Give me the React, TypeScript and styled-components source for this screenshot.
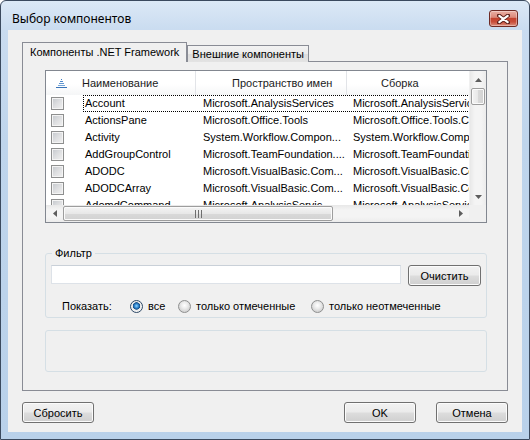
import React from 'react';
import styled, { createGlobalStyle } from 'styled-components';

const GlobalStyle = createGlobalStyle`
  html, body {
    margin: 0;
    padding: 0;
    background: #ffffff;
  }
  body {
    font-family: "Liberation Sans", Arial, sans-serif;
    font-size: 11px;
    color: #000000;
  }
  * {
    box-sizing: border-box;
  }
`;

const Window = styled.div`
  width: 530px;
  height: 440px;
  display: flex;
  flex-direction: column;
  border: 1px solid #3b4a5e;
  border-radius: 6px 6px 0 0;
  overflow: hidden;
  background: linear-gradient(to bottom, #dce9f6 0px, #cadcf0 28px, #bfd5ec 140px, #b9d1ea 100%);
`;

const TitleBar = styled.div`
  height: 29px;
  flex: none;
  display: flex;
  align-items: flex-start;
  padding: 0 11px 0 11px;
`;

const Title = styled.div`
  margin-top: 10px;
  font-family: "Noto Sans", "Liberation Sans", sans-serif;
  font-size: 12px;
  line-height: 16px;
  color: #000;
`;

const CloseButton = styled.div`
  margin-left: auto;
  margin-top: 9px;
  width: 29px;
  height: 17px;
  border: 1px solid #6e2a24;
  border-radius: 3px;
  display: flex;
  align-items: center;
  justify-content: center;
  background: linear-gradient(
    to bottom,
    #eab0a4 0%,
    #dc8a7b 42%,
    #c4432f 50%,
    #c84d39 72%,
    #dc8f7f 100%
  );
  box-shadow: inset 0 0 0 1px rgba(255, 255, 255, 0.35);
`;

const Client = styled.div`
  flex: 1;
  margin: 0 7px 7px 7px;
  background: #f0f0f0;
  padding: 12px 14px 0 14px;
  display: flex;
  flex-direction: column;
`;

const TabStrip = styled.div`
  display: flex;
  align-items: flex-end;
  height: 20px;
  flex: none;
`;

const Tab = styled.div<{ $active?: boolean }>`
  position: relative;
  z-index: ${p => (p.$active ? 1 : 0)};
  height: ${p => (p.$active ? 20 : 17)}px;
  padding: 0 ${p => (p.$active ? 7 : 4)}px;
  line-height: ${p => (p.$active ? 18 : 16)}px;
  border: 1px solid #898c95;
  border-bottom: none;
  white-space: nowrap;
  background: ${p => (p.$active ? '#f0f0f0' : 'linear-gradient(to bottom, #f3f3f3, #ebebeb 50%, #dddddd 51%, #e3e3e3)')};
`;

const TabPanel = styled.div`
  margin-top: -1px;
  height: 330px;
  flex: none;
  border: 1px solid #898c95;
  background: #f0f0f0;
  padding: 8px 0 0 22px;
  display: flex;
  flex-direction: column;
`;

const ListBox = styled.div`
  width: 442px;
  height: 153px;
  flex: none;
  border: 1px solid #828790;
  background: #ffffff;
  display: grid;
  grid-template-columns: 1fr 17px;
  grid-template-rows: 1fr 17px;
`;

const Viewport = styled.div`
  overflow: hidden;
  min-width: 0;
  display: flex;
  flex-direction: column;
`;

const Header = styled.div`
  display: flex;
  height: 24px;
  flex: none;
  background: linear-gradient(to bottom, #ffffff 0%, #ffffff 55%, #f5f6f7 100%);
`;

const HeaderCell = styled.div<{ $w: number; $pad: number; $divider?: boolean }>`
  flex: none;
  width: ${p => p.$w}px;
  padding-left: ${p => p.$pad}px;
  display: flex;
  align-items: center;
  white-space: nowrap;
  color: #1b1b1b;
  border-right: 1px solid ${p => (p.$divider ? '#e2e4e8' : 'transparent')};
`;

const Row = styled.div`
  display: flex;
  height: 17px;
  flex: none;
`;

const CheckCell = styled.div`
  flex: none;
  width: 37px;
  padding-left: 5px;
  display: flex;
  align-items: center;
`;

const CheckBox = styled.div`
  width: 13px;
  height: 13px;
  border: 1px solid #8e8f8f;
  background: linear-gradient(135deg, #c3c7cc 0%, #dedfe1 50%, #f1f1f1 100%);
  box-shadow: inset 0 0 0 1px #f4f4f4;
`;

const RowCells = styled.div<{ $focused?: boolean }>`
  flex: none;
  display: grid;
  grid-template-columns: 112px 151px 150px;
  border: 1px dotted ${p => (p.$focused ? '#000000' : 'transparent')};
`;

const Cell = styled.div<{ $pad: number }>`
  padding-left: ${p => p.$pad}px;
  line-height: 15px;
  white-space: nowrap;
  overflow: hidden;
`;

const VScroll = styled.div`
  display: flex;
  flex-direction: column;
  background: linear-gradient(to right, #e8e8e8, #f4f4f4 30%, #f4f4f4 70%, #ececec);
  border-left: 1px solid #f0f0f0;
`;

const HScroll = styled.div`
  display: flex;
  background: linear-gradient(to bottom, #e8e8e8, #f4f4f4 30%, #f4f4f4 70%, #ececec);
`;

const ArrowBox = styled.div`
  width: 17px;
  height: 17px;
  flex: none;
  display: flex;
  align-items: center;
  justify-content: center;
`;

const VThumb = styled.div`
  height: 17px;
  margin: 0 1px;
  flex: none;
  border: 1px solid #9d9d9d;
  border-radius: 2px;
  background: linear-gradient(to right, #f4f4f4, #e8e8e8 50%, #d9d9d9 51%, #d2d2d2);
  box-shadow: inset 0 0 0 1px #fbfbfb;
`;

const HThumb = styled.div`
  width: 270px;
  margin: 1px 0;
  flex: none;
  border: 1px solid #9d9d9d;
  border-radius: 2px;
  display: flex;
  align-items: center;
  justify-content: center;
  background: linear-gradient(to bottom, #f4f4f4, #e8e8e8 50%, #d9d9d9 51%, #d2d2d2);
  box-shadow: inset 0 0 0 1px #fbfbfb;
`;

const Track = styled.div`
  flex: 1;
`;

const Corner = styled.div`
  background: #f0f0f0;
`;

const GroupBox = styled.fieldset`
  margin: 24px 0 0 0;
  width: 442px;
  padding: 0 5px 3px 5px;
  border: 1px solid #d5dfe5;
  border-radius: 3px;
  min-width: 0;
`;

const Legend = styled.legend`
  padding: 0 3px;
  margin-left: 1px;
  line-height: 13px;
  color: #000;
`;

const FilterRow = styled.div`
  margin-top: 5px;
  display: flex;
  align-items: flex-start;
  gap: 7px;
`;

const TextInput = styled.input`
  flex: 1;
  height: 19px;
  margin: 0;
  border: 1px solid #dde2e8;
  border-top-color: #c9d0d8;
  background: #ffffff;
  font: inherit;
  padding: 0 3px;
  outline: none;
`;

const Button = styled.button<{ $w?: number }>`
  width: ${p => p.$w ?? 72}px;
  height: 21px;
  flex: none;
  margin: 0;
  padding: 0;
  border: 1px solid #707070;
  border-radius: 3px;
  font-family: "Liberation Sans", Arial, sans-serif;
  font-size: 11px;
  color: #000;
  background: linear-gradient(to bottom, #f2f2f2 0%, #ebebeb 48%, #dddddd 52%, #cfcfcf 100%);
  box-shadow: inset 0 0 0 1px #fbfbfb;
`;

const ShowRow = styled.div`
  margin-top: 12px;
  height: 16px;
  display: grid;
  grid-template-columns: 68px 48px 133px auto;
  align-items: center;
  padding-left: 11px;
`;

const RadioOption = styled.label`
  display: flex;
  align-items: center;
  gap: 5px;
  white-space: nowrap;
`;

const Radio = styled.span<{ $checked?: boolean }>`
  width: 13px;
  height: 13px;
  flex: none;
  border-radius: 50%;
  border: 1px solid ${p => (p.$checked ? '#2c4866' : '#8e8f8f')};
  background: ${p =>
    p.$checked
      ? 'radial-gradient(circle at 50% 45%, #8fd4ff 0px, #2f86cf 2px, #174f88 3.4px, #e9e9e9 4px, #f6f6f6 6px)'
      : 'radial-gradient(circle at 50% 40%, #ffffff 0px, #ededed 3px, #d5d5d5 6px)'};
`;

const InfoBox = styled.div`
  margin-top: 12px;
  width: 442px;
  height: 42px;
  flex: none;
  border: 1px solid #d5dfe5;
  border-radius: 3px;
`;

const ButtonRow = styled.div`
  margin-top: 11px;
  display: flex;
  gap: 20px;
`;

const Spacer = styled.div`
  flex: 1;
`;

const SortIcon = () => (
  <svg width="11" height="9" viewBox="0 0 11 9">
    <rect x="5" y="0" width="1" height="1" fill="#3f7cc2" />
    <rect x="4" y="2" width="3" height="1" fill="#4f89ca" />
    <rect x="3" y="4" width="5" height="1" fill="#6398d1" />
    <rect x="2" y="6" width="7" height="1" fill="#78a7d8" />
    <rect x="0" y="8" width="11" height="1" fill="#3a74b8" />
  </svg>
);

const Arrow = ({ dir }: { dir: 'up' | 'down' | 'left' | 'right' }) => {
  const points = {
    up: '0,4 3.5,0 7,4',
    down: '0,0 3.5,4 7,0',
    left: '4,0 0,3.5 4,7',
    right: '0,0 4,3.5 0,7',
  }[dir];
  const vertical = dir === 'up' || dir === 'down';
  return (
    <svg width={vertical ? 7 : 4} height={vertical ? 4 : 7} viewBox={vertical ? '0 0 7 4' : '0 0 4 7'}>
      <polygon points={points} fill="#5d5d5d" />
    </svg>
  );
};

const Grip = () => (
  <svg width="7" height="8" viewBox="0 0 7 8">
    <rect x="0" y="0" width="1" height="8" fill="#6e6e6e" />
    <rect x="3" y="0" width="1" height="8" fill="#6e6e6e" />
    <rect x="6" y="0" width="1" height="8" fill="#6e6e6e" />
  </svg>
);

const CloseGlyph = () => (
  <svg width="13" height="10" viewBox="0 0 13 10">
    <path d="M2 1.5 L11 8.5 M11 1.5 L2 8.5" stroke="#5a1f1a" strokeWidth="4" strokeLinecap="round" />
    <path d="M2.3 1.8 L10.7 8.2 M10.7 1.8 L2.3 8.2" stroke="#ffffff" strokeWidth="2.2" strokeLinecap="round" />
  </svg>
);

const components = [
  { name: 'Account', ns: 'Microsoft.AnalysisServices', asm: 'Microsoft.AnalysisServices' },
  { name: 'ActionsPane', ns: 'Microsoft.Office.Tools', asm: 'Microsoft.Office.Tools.Common' },
  { name: 'Activity', ns: 'System.Workflow.Compon...', asm: 'System.Workflow.ComponentModel' },
  { name: 'AddGroupControl', ns: 'Microsoft.TeamFoundation....', asm: 'Microsoft.TeamFoundation.Controls' },
  { name: 'ADODC', ns: 'Microsoft.VisualBasic.Com...', asm: 'Microsoft.VisualBasic.Compatibility.Data' },
  { name: 'ADODCArray', ns: 'Microsoft.VisualBasic.Com...', asm: 'Microsoft.VisualBasic.Compatibility.Data' },
  { name: 'AdomdCommand', ns: 'Microsoft.AnalysisServic...', asm: 'Microsoft.AnalysisServices.AdomdClient' },
];

export const App: React.FC = () => {
  return (
    <>
      <GlobalStyle />
      <Window>
        <TitleBar>
          <Title>Выбор компонентов</Title>
          <CloseButton>
            <CloseGlyph />
          </CloseButton>
        </TitleBar>
        <Client>
          <TabStrip>
            <Tab $active>Компоненты .NET Framework</Tab>
            <Tab>Внешние компоненты</Tab>
          </TabStrip>
          <TabPanel>
            <ListBox>
              <Viewport>
                <Header>
                  <HeaderCell $w={32} $pad={10}>
                    <SortIcon />
                  </HeaderCell>
                  <HeaderCell $w={118} $pad={4} $divider>
                    Наименование
                  </HeaderCell>
                  <HeaderCell $w={151} $pad={36} $divider>
                    Пространство имен
                  </HeaderCell>
                  <HeaderCell $w={150} $pad={34}>
                    Сборка
                  </HeaderCell>
                </Header>
                {components.map((c, i) => (
                  <Row key={c.name}>
                    <CheckCell>
                      <CheckBox />
                    </CheckCell>
                    <RowCells $focused={i === 0}>
                      <Cell $pad={1}>{c.name}</Cell>
                      <Cell $pad={7}>{c.ns}</Cell>
                      <Cell $pad={6}>{c.asm}</Cell>
                    </RowCells>
                  </Row>
                ))}
              </Viewport>
              <VScroll>
                <ArrowBox>
                  <Arrow dir="up" />
                </ArrowBox>
                <VThumb />
                <Track />
                <ArrowBox>
                  <Arrow dir="down" />
                </ArrowBox>
              </VScroll>
              <HScroll>
                <ArrowBox>
                  <Arrow dir="left" />
                </ArrowBox>
                <HThumb>
                  <Grip />
                </HThumb>
                <Track />
                <ArrowBox>
                  <Arrow dir="right" />
                </ArrowBox>
              </HScroll>
              <Corner />
            </ListBox>

            <GroupBox>
              <Legend>Фильтр</Legend>
              <FilterRow>
                <TextInput type="text" />
                <Button $w={73}>Очистить</Button>
              </FilterRow>
              <ShowRow>
                <span>Показать:</span>
                <RadioOption>
                  <Radio $checked />
                  все
                </RadioOption>
                <RadioOption>
                  <Radio />
                  только отмеченные
                </RadioOption>
                <RadioOption>
                  <Radio />
                  только неотмеченные
                </RadioOption>
              </ShowRow>
            </GroupBox>

            <InfoBox />
          </TabPanel>
          <ButtonRow>
            <Button>Сбросить</Button>
            <Spacer />
            <Button>OK</Button>
            <Button>Отмена</Button>
          </ButtonRow>
        </Client>
      </Window>
    </>
  );
};

export default App;
